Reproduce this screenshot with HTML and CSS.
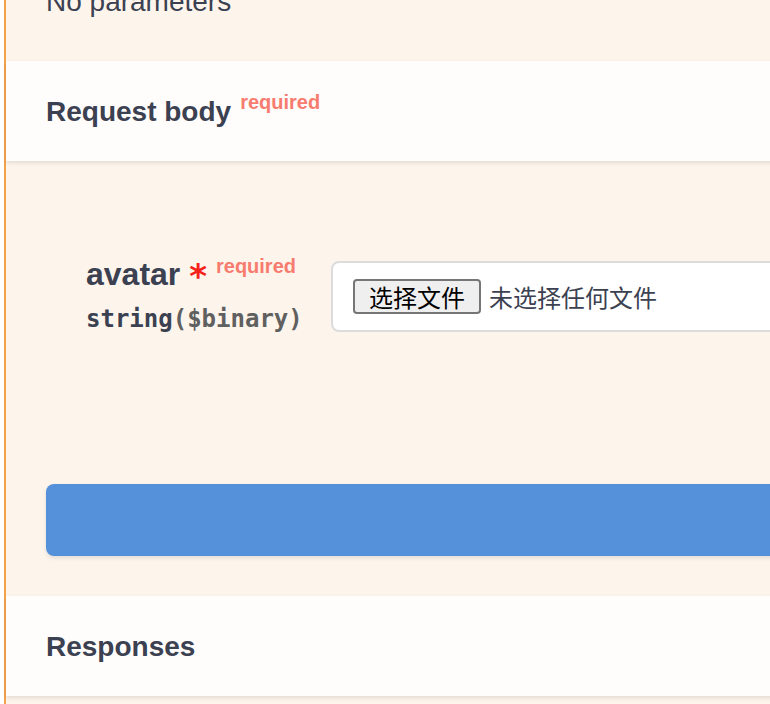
FILE: index.html
```html
<!DOCTYPE html>
<html lang="zh-CN">
<head>
<meta charset="utf-8">
<title>Request body</title>
<link rel="stylesheet" href="styles.css">
</head>
<body>
<div class="opblock">
  <div class="desc"><p>No parameters</p></div>
  <div class="sec-head">
    <h4 class="title">Request body<span class="req-tag">required</span></h4>
  </div>
  <div class="sec-body">
    <div class="params">
      <div class="param-row">
        <div class="col-name">
          <div class="pname">avatar&nbsp;<span class="star">*</span><span class="req-tag">required</span></div>
          <div class="ptype">string<span class="fmt">($binary)</span></div>
        </div>
        <div class="col-desc">
          <div class="file-input">
            <span class="file-btn">选择文件</span>
            <span class="file-none">未选择任何文件</span>
          </div>
        </div>
      </div>
    </div>
    <div class="exec-wrap"><button class="execute" type="button"></button></div>
  </div>
  <div class="sec-head">
    <h4 class="title">Responses</h4>
  </div>
  <div class="sec-tail"></div>
</div>
</body>
</html>
```

FILE: styles.css
```css
html, body {
  margin: 0;
  padding: 0;
  overflow: hidden;
  background: #ffffff;
}

body {
  font-family: "Liberation Sans", Arial, "Noto Sans CJK SC", sans-serif;
  color: #3b4151;
}

.opblock {
  margin-left: 4px;
  width: 1200px;
  border-left: 2px solid #f4a24a;
  background: #fdf5ec;
}

.desc {
  margin-top: -14px;
  padding: 0 40px 43px;
}

.desc p {
  margin: 0;
  font-size: 28px;
  line-height: 32px;
}

.sec-head {
  position: relative;
  height: 100px;
  display: flex;
  align-items: center;
  padding: 1px 40px 0;
  box-sizing: border-box;
  background: #fffdfb;
  box-shadow: 0 2px 4px rgba(0, 0, 0, 0.1);
}

.title {
  margin: 0;
  font-size: 28px;
  line-height: 36px;
  font-weight: 700;
}

.req-tag {
  font-size: 20px;
  line-height: 0;
  vertical-align: 12px;
  padding: 0 10px 0 9px;
  color: #f77c6f;
  font-weight: 700;
}

.sec-body {
  padding-top: 95px;
}

.params {
  padding: 0 0 111px 80px;
}

.param-row {
  display: flex;
  align-items: flex-start;
}

.col-name {
  width: 245px;
  flex: none;
}

.pname {
  font-size: 32px;
  line-height: 36px;
  font-weight: 700;
  white-space: nowrap;
}

.star {
  color: #f5221a;
  font-family: "DejaVu Sans", sans-serif;
  font-size: 34px;
  line-height: 0;
  vertical-align: -3px;
}

.ptype {
  padding-top: 13px;
  font-family: "DejaVu Sans Mono", "Liberation Mono", monospace;
  font-size: 24px;
  line-height: 28px;
  font-weight: 700;
}

.fmt {
  color: #606060;
}

.col-desc {
  padding-top: 5px;
}

.file-input {
  width: 700px;
  height: 67px;
  box-sizing: content-box;
  display: flex;
  align-items: center;
  gap: 8px;
  padding: 0 20px;
  background: #ffffff;
  border: 2px solid #dcdcdc;
  border-radius: 8px;
  font-family: "Noto Sans CJK SC", sans-serif;
}

.file-btn {
  box-sizing: border-box;
  height: 35px;
  width: 128px;
  display: flex;
  align-items: center;
  justify-content: center;
  background: #efefef;
  border: 2px solid #767676;
  border-radius: 4px;
  color: #000000;
  font-size: 24px;
}

.file-none {
  font-size: 24px;
  color: #3b4151;
}

.exec-wrap {
  padding: 40px 40px;
}

.execute {
  display: block;
  width: 100%;
  height: 72px;
  border: none;
  border-radius: 8px;
  background: #5591db;
  box-shadow: 0 2px 4px rgba(0, 0, 0, 0.1);
}

.sec-tail {
  height: 40px;
}
```
